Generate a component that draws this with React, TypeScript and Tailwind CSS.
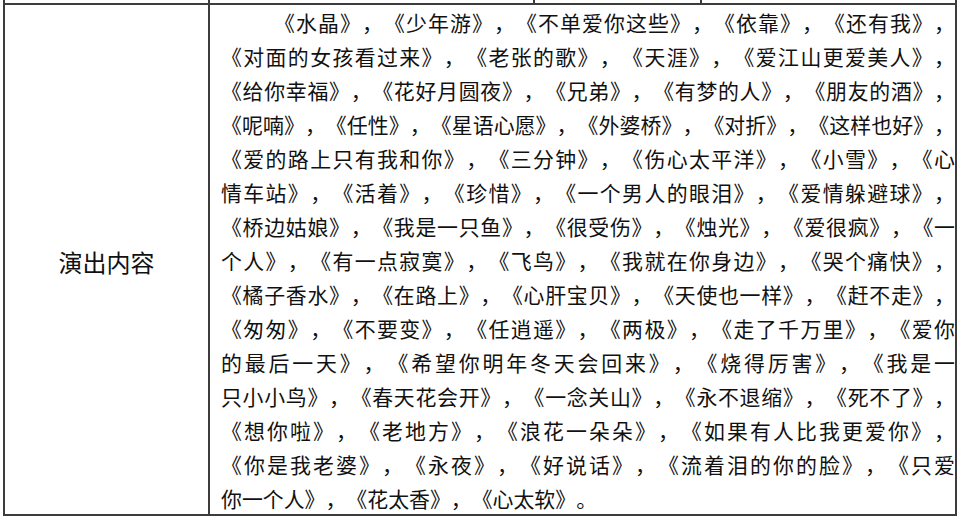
const lines = [
  "《水晶》，《少年游》，《不单爱你这些》，《依靠》，《还有我》，",
  "《对面的女孩看过来》，《老张的歌》，《天涯》，《爱江山更爱美人》，",
  "《给你幸福》，《花好月圆夜》，《兄弟》，《有梦的人》，《朋友的酒》，",
  "《呢喃》，《任性》，《星语心愿》，《外婆桥》，《对折》，《这样也好》，",
  "《爱的路上只有我和你》，《三分钟》，《伤心太平洋》，《小雪》，《心",
  "情车站》，《活着》，《珍惜》，《一个男人的眼泪》，《爱情躲避球》，",
  "《桥边姑娘》，《我是一只鱼》，《很受伤》，《烛光》，《爱很疯》，《一",
  "个人》，《有一点寂寞》，《飞鸟》，《我就在你身边》，《哭个痛快》，",
  "《橘子香水》，《在路上》，《心肝宝贝》，《天使也一样》，《赶不走》，",
  "《匆匆》，《不要变》，《任逍遥》，《两极》，《走了千万里》，《爱你",
  "的最后一天》，《希望你明年冬天会回来》，《烧得厉害》，《我是一",
  "只小小鸟》，《春天花会开》，《一念关山》，《永不退缩》，《死不了》，",
  "《想你啦》，《老地方》，《浪花一朵朵》，《如果有人比我更爱你》，",
  "《你是我老婆》，《永夜》，《好说话》，《流着泪的你的脸》，《只爱",
  "你一个人》，《花太香》，《心太软》。",
];

export default function App() {
  return (
    <div className="h-[520px] w-[960px] overflow-hidden bg-white font-['Noto_Sans_CJK_SC',sans-serif] text-[#111]">
      <div className="ml-[3px] w-[954px]">
        {/* bottom of the row above */}
        <div className="flex h-[3px] border-x-2 border-[#3c3c3c]">
          <div className="w-[205px] border-r-2 border-[#3c3c3c]" />
          <div className="w-[325px] border-r-2 border-[#3c3c3c]" />
          <div className="w-[167px] border-r-2 border-[#3c3c3c]" />
          <div className="flex-1" />
        </div>
        <div className="flex h-[513px] border-2 border-[#3c3c3c]">
          <div className="flex w-[205px] shrink-0 items-center justify-center border-r-2 border-[#3c3c3c] pt-[4px] text-[24px]">
            演出内容
          </div>
          <div className="flex-1 pl-[11px] text-[20.9px] leading-[34px] [text-spacing-trim:space-all]">
            {lines.map((line, i) => (
              <div
                key={i}
                className={
                  i === lines.length - 1
                    ? "whitespace-nowrap"
                    : i === 0
                      ? "indent-[53px] text-justify whitespace-nowrap [text-align-last:justify]"
                      : "text-justify whitespace-nowrap [text-align-last:justify]"
                }
              >
                {line}
              </div>
            ))}
          </div>
        </div>
      </div>
    </div>
  );
}
